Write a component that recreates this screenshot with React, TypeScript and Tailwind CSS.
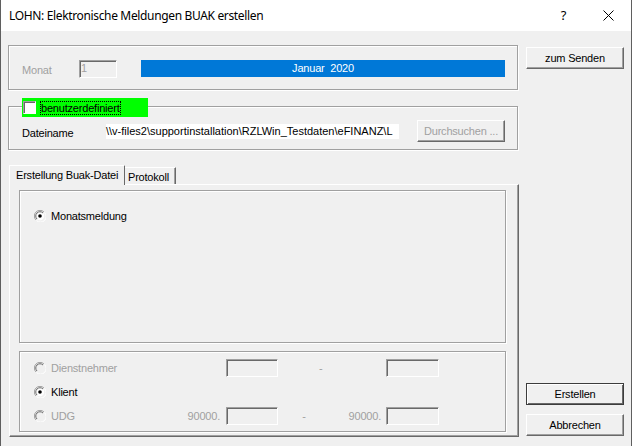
import React from "react";

const Radio: React.FC<{ checked?: boolean; disabled?: boolean }> = ({
  checked,
  disabled,
}) => (
  <svg width="12" height="12" viewBox="0 0 12 12" className="flex-none">
    <path d="M10 2 A5.5 5.5 0 0 0 2 10" stroke="#a0a0a0" strokeWidth="1" fill="none" />
    <path d="M10.5 2.5 A5.5 5.5 0 0 1 2.5 10.5" stroke="#ffffff" strokeWidth="1" fill="none" />
    <circle cx="6" cy="6" r="4.2" fill={disabled ? "#f0f0f0" : "#ffffff"} />
    <path d="M9 3 A4.2 4.2 0 0 0 3 9" stroke="#696969" strokeWidth="1" fill="none" />
    {checked && <circle cx="6" cy="6" r="1.8" fill="#000" />}
  </svg>
);

const sunken =
  "border border-t-[#a0a0a0] border-l-[#a0a0a0] border-r-white border-b-white shadow-[inset_1px_1px_0_#696969]";

const etched =
  "border border-[#a0a0a0] shadow-[inset_1px_1px_0_#fff,1px_1px_0_#fff]";

const Button: React.FC<{
  label: string;
  isDefault?: boolean;
  disabled?: boolean;
  className?: string;
}> = ({ label, isDefault, disabled, className = "" }) => (
  <div
    className={`${className} flex items-center justify-center bg-[#f0f0f0] ${
      isDefault
        ? "border border-[#3c3c3c] shadow-[inset_1px_1px_0_#fff,inset_-1px_-1px_0_#696969]"
        : "border border-t-white border-l-white border-r-[#696969] border-b-[#696969] shadow-[inset_-1px_-1px_0_#a0a0a0]"
    } ${disabled ? "text-[#a0a0a0]" : "text-black"}`}
  >
    {label}
  </div>
);

const Field: React.FC<{ className?: string }> = ({ className = "" }) => (
  <div className={`${sunken} bg-[#f0f0f0] h-[18px] ${className}`} />
);

export default function App() {
  return (
    <div
      className="w-[632px] h-[446px] bg-[#f0f0f0] border-x border-[#5f5f5f] flex flex-col text-[11px] tracking-[-0.2px] text-black overflow-hidden"
      style={{ fontFamily: '"Liberation Sans", Arial, sans-serif' }}
    >
      {/* title bar */}
      <div
        className="h-[31px] bg-white flex items-center pl-[8px] text-[12px] tracking-[-0.35px]"
        style={{ fontFamily: '"Noto Sans", sans-serif' }}
      >
        <span className="flex-1">LOHN: Elektronische Meldungen BUAK erstellen</span>
        <span className="w-[46px] pl-[3px] text-center text-[13px]">?</span>
        <span className="w-[46px] flex justify-center">
          <svg width="11" height="11" viewBox="0 0 11 11">
            <path d="M0.5 0.5 L10.5 10.5 M10.5 0.5 L0.5 10.5" stroke="#000" strokeWidth="1" />
          </svg>
        </span>
      </div>

      <div className="flex flex-1 pl-[7px]">
        {/* left column */}
        <div className="w-[511px] flex flex-col pt-[14px]">
          {/* Monat */}
          <div className={`${etched} h-[45px] w-[510px] flex items-start pt-[14px] pl-[13px]`}>
            <span className="w-[57px] mt-[2px] text-[#a0a0a0]">Monat</span>
            <div className={`${sunken} w-[38px] h-[18px] pl-[1px] text-[#a0a0a0] leading-[15px]`}>
              1
            </div>
            <div className="ml-[24px] w-[364px] h-[17px] bg-[#0078d7] text-white flex items-center justify-center whitespace-pre">
              Januar  2020
            </div>
          </div>

          {/* benutzerdefiniert */}
          <div className={`${etched} relative mt-[16px] h-[44px] w-[510px] flex items-start pt-[13px] pl-[13px]`}>
            <div className="absolute -top-[9px] left-[13px] w-[126px] h-[19px] bg-[#00ff00] flex items-center pl-[1px]">
              <div className={`${sunken} w-[13px] h-[13px] bg-white`} />
              <span className="ml-[4px] px-[1px] leading-[14px] outline outline-1 outline-dotted outline-black -outline-offset-1">
                benutzerdefiniert
              </span>
            </div>
            <span className="w-[84px] mt-[5px]">Dateiname</span>
            <div className="w-[293px] h-[15px] mt-[4px] bg-white whitespace-nowrap leading-[15px] tracking-normal">
              \\v-files2\supportinstallation\RZLWin_Testdaten\eFINANZ\L
            </div>
            <Button label="Durchsuchen ..." disabled className="ml-[18px] w-[88px] h-[22px]" />
          </div>

          {/* tabs */}
          <div className="mt-[15px] flex items-end h-[19px] pl-[1px]">
            <div className="w-[116px] h-[20px] border-t border-l border-white border-r border-r-[#696969] rounded-t-[1px] flex items-center pl-[6px] bg-[#f0f0f0] relative z-10 -mb-[1px]">
              Erstellung Buak-Datei
            </div>
            <div className="h-[17px] w-[51px] border-t border-white border-r border-r-[#696969] shadow-[inset_-1px_0_0_#a0a0a0] flex items-center pl-[3px] pt-[2px]">
              Protokoll
            </div>
          </div>

          <div className="ml-[1px] w-[510px] h-[253px] border border-t-white border-l-white border-r-[#696969] border-b-[#696969] shadow-[inset_-1px_-1px_0_#a0a0a0] pt-[5px] pl-[9px] flex flex-col gap-[8px]">
            <div className={`${etched} w-[487px] h-[153px] pt-[17px] pl-[14px]`}>
              <div className="flex items-center gap-[5px]">
                <Radio checked />
                <span>Monatsmeldung</span>
              </div>
            </div>
            <div className={`${etched} w-[487px] h-[81px] pt-[7px] pl-[14px] flex flex-col gap-[6px]`}>
              <div className="flex items-center h-[18px]">
                <Radio disabled />
                <span className="ml-[5px] w-[175px] text-[#a0a0a0]">Dienstnehmer</span>
                <Field className="w-[52px]" />
                <span className="w-[108px] pl-[41px] text-[#a0a0a0]">-</span>
                <Field className="w-[53px]" />
              </div>
              <div className="flex items-center h-[18px]">
                <Radio checked />
                <span className="ml-[5px]">Klient</span>
              </div>
              <div className="flex items-center h-[18px]">
                <Radio disabled />
                <span className="ml-[5px] w-[134px] text-[#a0a0a0]">UDG</span>
                <span className="w-[38px] pr-[3px] text-right text-[#a0a0a0]">90000.</span>
                <Field className="ml-[3px] w-[52px]" />
                <span className="w-[52px] text-[#a0a0a0] text-center">-</span>
                <span className="w-[53px] pr-[2px] text-right text-[#a0a0a0]">90000.</span>
                <Field className="ml-[3px] w-[53px]" />
              </div>
            </div>
          </div>
        </div>

        {/* right column */}
        <div className="ml-[7px] w-[98px] flex flex-col pt-[16px] pb-[10px]">
          <Button label="zum Senden" className="w-[98px] h-[22px]" />
          <div className="flex-1" />
          <Button label="Erstellen" isDefault className="w-[98px] h-[22px]" />
          <Button label="Abbrechen" className="w-[98px] h-[22px] mt-[9px]" />
        </div>
      </div>
    </div>
  );
}
